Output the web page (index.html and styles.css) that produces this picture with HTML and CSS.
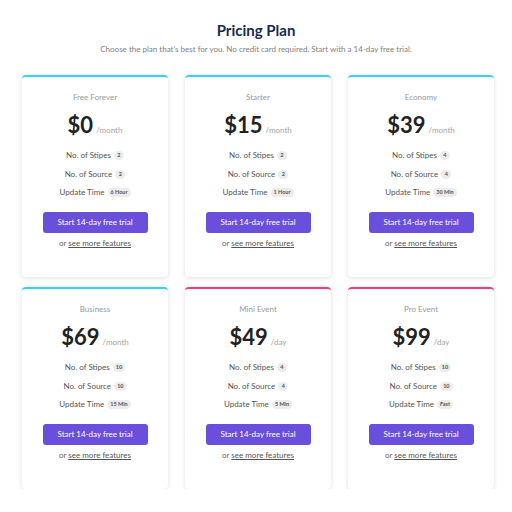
FILE: index.html
```html
<!DOCTYPE html>
<html>
<head>
<meta charset="utf-8">
<link rel="stylesheet" href="styles.css">
</head>
<body>
<header class="head">
  <h1 class="title">Pricing Plan</h1>
  <p class="sub">Choose the plan that's best for you. No credit card required. Start with a 14-day free trial.</p>
</header>
<main class="grid">
  <section class="card cyan">
    <div class="name">Free Forever</div>
    <div class="price"><span class="amt">$0</span><span class="per">/month</span></div>
    <ul class="feats">
      <li>No. of Stipes <span class="badge">2</span></li>
      <li>No. of Source <span class="badge">2</span></li>
      <li>Update Time <span class="badge">6 Hour</span></li>
    </ul>
    <button class="btn">Start 14-day free trial</button>
    <div class="more">or <a href="#">see more features</a></div>
  </section>
  <section class="card cyan">
    <div class="name">Starter</div>
    <div class="price"><span class="amt">$15</span><span class="per">/month</span></div>
    <ul class="feats">
      <li>No. of Stipes <span class="badge">2</span></li>
      <li>No. of Source <span class="badge">2</span></li>
      <li>Update Time <span class="badge">1 Hour</span></li>
    </ul>
    <button class="btn">Start 14-day free trial</button>
    <div class="more">or <a href="#">see more features</a></div>
  </section>
  <section class="card cyan">
    <div class="name">Economy</div>
    <div class="price"><span class="amt">$39</span><span class="per">/month</span></div>
    <ul class="feats">
      <li>No. of Stipes <span class="badge">4</span></li>
      <li>No. of Source <span class="badge">4</span></li>
      <li>Update Time <span class="badge">30 Min</span></li>
    </ul>
    <button class="btn">Start 14-day free trial</button>
    <div class="more">or <a href="#">see more features</a></div>
  </section>
  <section class="card cyan">
    <div class="name">Business</div>
    <div class="price"><span class="amt">$69</span><span class="per">/month</span></div>
    <ul class="feats">
      <li>No. of Stipes <span class="badge">10</span></li>
      <li>No. of Source <span class="badge">10</span></li>
      <li>Update Time <span class="badge">15 Min</span></li>
    </ul>
    <button class="btn">Start 14-day free trial</button>
    <div class="more">or <a href="#">see more features</a></div>
  </section>
  <section class="card pink">
    <div class="name">Mini Event</div>
    <div class="price"><span class="amt">$49</span><span class="per">/day</span></div>
    <ul class="feats">
      <li>No. of Stipes <span class="badge">4</span></li>
      <li>No. of Source <span class="badge">4</span></li>
      <li>Update Time <span class="badge">5 Min</span></li>
    </ul>
    <button class="btn">Start 14-day free trial</button>
    <div class="more">or <a href="#">see more features</a></div>
  </section>
  <section class="card pink">
    <div class="name">Pro Event</div>
    <div class="price"><span class="amt">$99</span><span class="per">/day</span></div>
    <ul class="feats">
      <li>No. of Stipes <span class="badge">10</span></li>
      <li>No. of Source <span class="badge">10</span></li>
      <li>Update Time <span class="badge">Fast</span></li>
    </ul>
    <button class="btn">Start 14-day free trial</button>
    <div class="more">or <a href="#">see more features</a></div>
  </section>
</main>
</body>
</html>
```
FILE: styles.css
```css
* { box-sizing: border-box; }
html, body { margin: 0; padding: 0; background: #fff; }
body { font-family: Lato, "Open Sans", sans-serif; color: #555; }

.head { text-align: center; padding-top: 21px; }
.title { margin: 0; font-size: 15px; line-height: 18px; font-weight: 700; color: #172b4d; }
.sub { margin: 4px 0 0; font-size: 8px; line-height: 12px; color: #808080; }

.grid {
  display: grid;
  grid-template-columns: repeat(3, 146px);
  column-gap: 17px;
  row-gap: 10px;
  margin: 20px 0 0 22px;
}

.card {
  height: 202px;
  border-radius: 4px;
  background: #fff;
  box-shadow: 0 1px 4px rgba(0,0,0,0.13);
  border-top: 2px solid #36d1fa;
  padding-top: 14px;
  text-align: center;
  display: flex;
  flex-direction: column;
  align-items: center;
}
.card.pink { border-top-color: #ee3d78; }

.name { font-size: 8px; line-height: 12px; color: #999; }

.price { margin-top: 9px; height: 26px; display: flex; align-items: baseline; justify-content: center; }
.amt { font-size: 22px; line-height: 26px; font-weight: 700; color: #222; }
.per { font-size: 8px; color: #a3a3a3; margin-left: 3px; }

.feats { list-style: none; margin: 8px 0 0; padding: 0; }
.feats li { font-size: 8px; line-height: 18.5px; color: #555; }
.badge {
  display: inline-block;
  background: #ececec;
  color: #555;
  font-size: 5.5px;
  font-weight: 700;
  line-height: 9px;
  padding: 0 3px;
  min-width: 10px;
  border-radius: 5px;
  vertical-align: 1px;
  margin-left: 1px;
}

.btn {
  margin-top: 10px;
  width: 105px;
  height: 21px;
  border: 0;
  border-radius: 3px;
  background: #6a4fdc;
  color: #fff;
  font-family: inherit;
  font-size: 8px;
  padding: 0;
}

.more { margin-top: 4px; font-size: 8px; line-height: 12px; color: #666; }
.more a { color: #555; text-decoration: underline; }
```
